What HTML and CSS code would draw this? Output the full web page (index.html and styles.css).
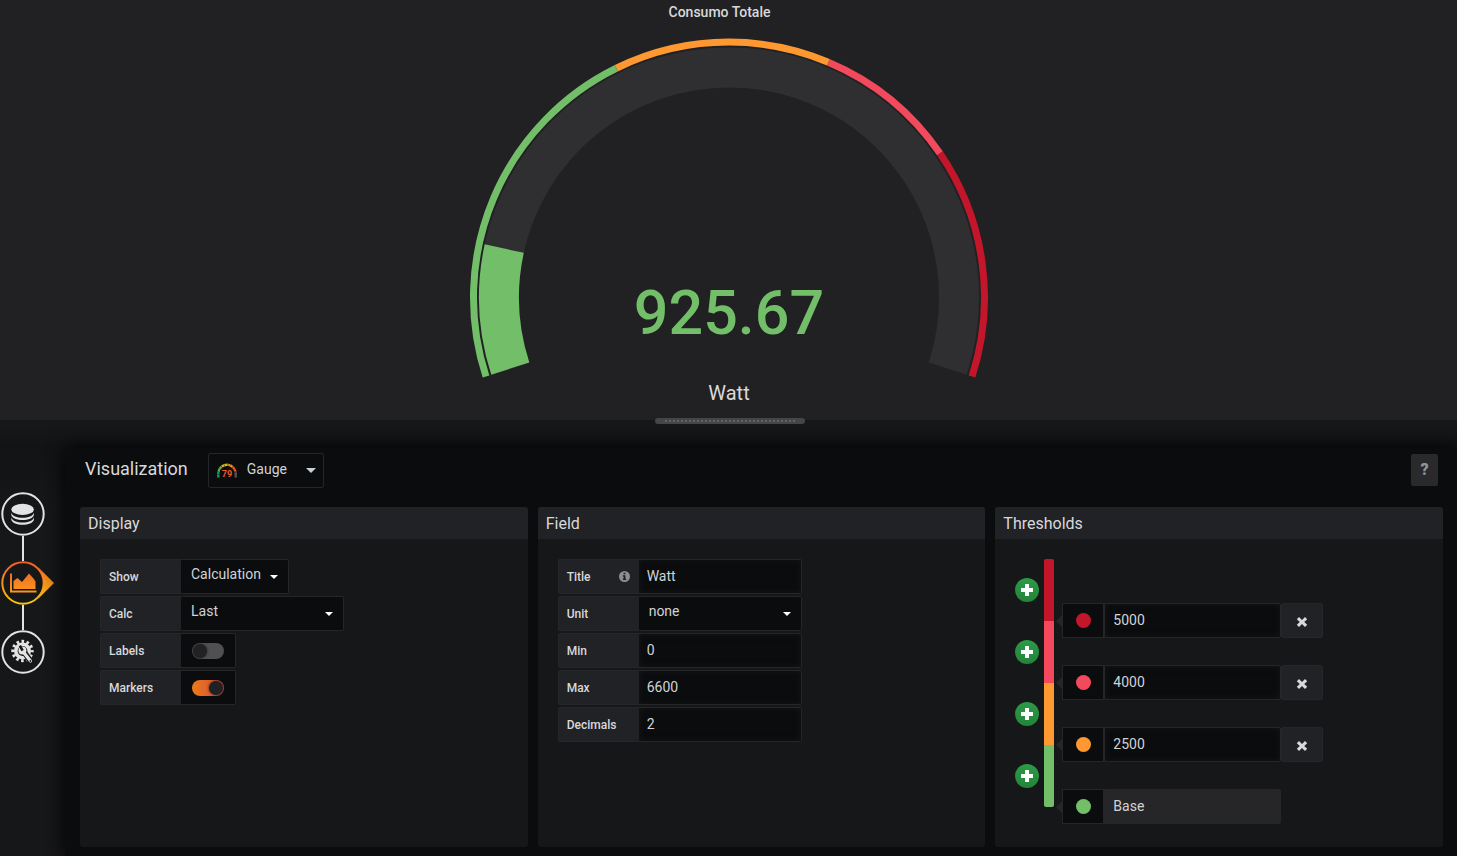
FILE: index.html
```html
<!DOCTYPE html>
<html lang="en">
<head>
<meta charset="utf-8">
<title>Consumo Totale</title>
<link rel="stylesheet" href="styles.css">
</head>
<body>
<section class="preview">
  <h1 class="preview-title">Consumo Totale</h1>
  <svg class="gauge" viewBox="0 0 520 388" role="img" aria-label="925.67 Watt">
    <g fill="none">
      <path stroke="#2f2f32" stroke-width="40" d="M41.3 343.6A230 230 0 1 1 478.7 343.6" pathLength="6600" stroke-dasharray="0 925 9000"/>
      <path stroke="#73bf69" stroke-width="40" d="M41.3 343.6A230 230 0 1 1 478.7 343.6" pathLength="6600" stroke-dasharray="925.67 9000"/>
      <path stroke="#c4162a" stroke-width="7" d="M17 351.5A255.5 255.5 0 1 1 503 351.5" pathLength="6600" stroke-dasharray="0 5000 1700 9000"/>
      <path stroke="#f2495c" stroke-width="7" d="M17 351.5A255.5 255.5 0 1 1 503 351.5" pathLength="6600" stroke-dasharray="0 4000 1000 9000"/>
      <path stroke="#ff9830" stroke-width="7" d="M17 351.5A255.5 255.5 0 1 1 503 351.5" pathLength="6600" stroke-dasharray="0 2500 1500 9000"/>
      <path stroke="#73bf69" stroke-width="7" d="M17 351.5A255.5 255.5 0 1 1 503 351.5" pathLength="6600" stroke-dasharray="2500 9000"/>
    </g>
    <text class="gauge-value" x="260" y="309">925.67</text>
    <text class="gauge-title" x="260" y="375">Watt</text>
  </svg>
  <div class="resizer"><div class="resizer-dots"></div></div>
</section>

<main class="editor">
  <nav class="tabs">
    <button class="tab" aria-label="Queries">
      <svg viewBox="0 0 56 44" width="56" height="44">
        <circle class="ring" cx="23" cy="22" r="20.7"/>
        <g fill="#e3e3e3"><ellipse cx="22.600" cy="17.400" rx="11.300" ry="5.600"/>
        <path d="M11.300 20.500c1 7 21.600 7 22.600 0v2.200c-1 7-21.600 7-22.600 0zM11.300 25.300c1 7 21.600 7 22.600 0v2.200c-1 7-21.600 7-22.600 0z"/></g>
      </svg>
    </button>
    <span class="tab-line"></span>
    <button class="tab" aria-label="Visualization">
      <svg viewBox="0 0 56 44" width="56" height="44">
        <defs><linearGradient id="hot" x1="0" y1="0" x2="0" y2="44" gradientUnits="userSpaceOnUse"><stop offset="0" stop-color="#f05a28"/><stop offset="1" stop-color="#fbca0a"/></linearGradient><linearGradient id="chart" x1="0" y1="12" x2="0" y2="32" gradientUnits="userSpaceOnUse"><stop offset="0" stop-color="#f26b25"/><stop offset="1" stop-color="#f99b1c"/></linearGradient></defs>
        <path fill="url(#hot)" d="M38 6 54 22 38 38Q49 22 38 6z"/>
        <circle cx="23" cy="22" r="20.700" fill="#161719" stroke="url(#hot)" stroke-width="2"/>
        <path fill="url(#chart)" d="M10 12.500h2v17h24.500v2H10zM13.500 28V20l4-3 4.500 4 7-8.500 4.500 5 2 3V28z"/>
      </svg>
    </button>
    <span class="tab-line"></span>
    <button class="tab" aria-label="General">
      <svg viewBox="0 0 56 44" width="56" height="44">
        <circle class="ring" cx="23" cy="22" r="20.700"/>
        <circle cx="22.500" cy="21" r="6.700" fill="none" stroke="#e3e3e3" stroke-width="3.600"/>
        <circle cx="22.500" cy="21" r="9.600" fill="none" stroke="#e3e3e3" stroke-width="3.200" stroke-dasharray="2.600 2.427" stroke-dashoffset="1.300"/>
        <path fill="none" stroke="#161719" stroke-width="5.600" stroke-linecap="round" d="M24 22 30.500 31"/>
        <path fill="none" stroke="#e3e3e3" stroke-width="3.200" stroke-linecap="round" d="M23 21.500 30.500 31"/>
        <circle cx="22.400" cy="20.400" r="4" fill="#e3e3e3"/>
        <path stroke="#161719" stroke-width="2.600" d="M22.600 20.700 19.800 15.600"/>
        <circle cx="30.400" cy="31" r="0.900" fill="#161719"/>
      </svg>
    </button>
  </nav>

  <div class="content">
    <header class="toolbar">
      <h2 class="toolbar-title">Visualization</h2>
      <div class="picker picker-type">
        <svg class="type-icon" viewBox="0 0 20 15" width="20" height="15" aria-hidden="true">
          <g fill="none" stroke-width="2.400">
            <path stroke="#08a05c" d="M1.300 14.500V10.500A8.700 8.700 0 0 1 18.700 10.500V14.500" pathLength="100" stroke-dasharray="16 200"/>
            <path stroke="#70ac45" d="M1.300 14.500V10.500A8.700 8.700 0 0 1 18.700 10.500V14.500" pathLength="100" stroke-dasharray="0 16 18 200"/>
            <path stroke="#d5b323" d="M1.300 14.500V10.500A8.700 8.700 0 0 1 18.700 10.500V14.500" pathLength="100" stroke-dasharray="0 34 20 200"/>
            <path stroke="#f29020" d="M1.300 14.500V10.500A8.700 8.700 0 0 1 18.700 10.500V14.500" pathLength="100" stroke-dasharray="0 54 14 200"/>
            <path stroke="#f05a28" d="M1.300 14.500V10.500A8.700 8.700 0 0 1 18.700 10.500V14.500" pathLength="100" stroke-dasharray="0 68 14 200"/>
            <path stroke="#58585a" d="M1.300 14.500V10.500A8.700 8.700 0 0 1 18.700 10.500V14.500" pathLength="100" stroke-dasharray="0 82 18 200"/>
            <path stroke="#0b0c0e" stroke-width="3" stroke-opacity=".7" d="M1.300 14.500V10.500A8.700 8.700 0 0 1 18.700 10.500V14.500" stroke-dasharray="0 2.600 .4 0"/>
          </g>
          <text class="type-number" x="10" y="14">79</text>
        </svg>
        <select class="select" aria-label="Visualization type"><option>Gauge</option></select>
      </div>
      <button class="help">?</button>
    </header>

    <div class="panels">
      <section class="panel">
        <h3 class="panel-title">Display</h3>
        <div class="panel-body">
          <div class="row"><label class="label" for="show">Show</label><div class="picker picker-small"><select class="select" id="show"><option>Calculation</option></select></div></div>
          <div class="row"><label class="label" for="calc">Calc</label><div class="picker"><select class="select" id="calc"><option>Last</option></select></div></div>
          <div class="row"><label class="label" for="labels">Labels</label><div class="switch-box"><input class="switch" type="checkbox" id="labels"></div></div>
          <div class="row"><label class="label" for="markers">Markers</label><div class="switch-box"><input class="switch" type="checkbox" id="markers" checked></div></div>
        </div>
      </section>

      <section class="panel">
        <h3 class="panel-title">Field</h3>
        <div class="panel-body">
          <div class="row"><label class="label" for="title">Title
            <svg viewBox="0 0 12 12" width="11" height="11" aria-hidden="true"><circle cx="6" cy="6" r="6" fill="#8e8e8e"/><path fill="#212124" d="M5 1.800h2v1.800H5zM4.200 4.600H7v3.800h.8v1.400H4.200V8.400H5V6h-.8z"/></svg>
          </label><input class="input" id="title" type="text" value="Watt"></div>
          <div class="row"><label class="label" for="unit">Unit</label><div class="picker"><select class="select" id="unit"><option>none</option></select></div></div>
          <div class="row"><label class="label" for="min">Min</label><input class="input" id="min" type="number" value="0"></div>
          <div class="row"><label class="label" for="max">Max</label><input class="input" id="max" type="number" value="6600"></div>
          <div class="row"><label class="label" for="decimals">Decimals</label><input class="input" id="decimals" type="number" value="2"></div>
        </div>
      </section>

      <section class="panel">
        <h3 class="panel-title">Thresholds</h3>
        <div class="panel-body thresholds">
          <div class="adders">
            <button class="add" aria-label="Add threshold above 5000"><svg viewBox="0 0 12 12" width="12" height="12"><path d="M4 0h4v4h4v4H8v4H4V8H0V4h4z"/></svg></button>
            <button class="add" aria-label="Add threshold above 4000"><svg viewBox="0 0 12 12" width="12" height="12"><path d="M4 0h4v4h4v4H8v4H4V8H0V4h4z"/></svg></button>
            <button class="add" aria-label="Add threshold above 2500"><svg viewBox="0 0 12 12" width="12" height="12"><path d="M4 0h4v4h4v4H8v4H4V8H0V4h4z"/></svg></button>
            <button class="add" aria-label="Add threshold above base"><svg viewBox="0 0 12 12" width="12" height="12"><path d="M4 0h4v4h4v4H8v4H4V8H0V4h4z"/></svg></button>
          </div>
          <div class="scale"><span class="dark-red"></span><span class="red"></span><span class="orange"></span><span class="green"></span></div>
          <div class="levels">
            <div class="level"><button class="swatch" aria-label="Color"><span class="dot dark-red"></span></button><input class="input" type="number" value="5000" aria-label="Threshold 5000"><button class="remove" aria-label="Remove 5000"><svg viewBox="0 0 12 12" width="12" height="12"><path d="m3 1 3 3 3-3 2.200 2.200-3 2.800 3 2.800L9 11 6 8l-3 3L.8 8.800l3-2.800-3-2.800z"/></svg></button></div>
            <div class="level"><button class="swatch" aria-label="Color"><span class="dot red"></span></button><input class="input" type="number" value="4000" aria-label="Threshold 4000"><button class="remove" aria-label="Remove 4000"><svg viewBox="0 0 12 12" width="12" height="12"><path d="m3 1 3 3 3-3 2.200 2.200-3 2.800 3 2.800L9 11 6 8l-3 3L.8 8.800l3-2.800-3-2.800z"/></svg></button></div>
            <div class="level"><button class="swatch" aria-label="Color"><span class="dot orange"></span></button><input class="input" type="number" value="2500" aria-label="Threshold 2500"><button class="remove" aria-label="Remove 2500"><svg viewBox="0 0 12 12" width="12" height="12"><path d="m3 1 3 3 3-3 2.200 2.200-3 2.800 3 2.800L9 11 6 8l-3 3L.8 8.800l3-2.800-3-2.800z"/></svg></button></div>
            <div class="level"><button class="swatch" aria-label="Color"><span class="dot green"></span></button><input class="input" type="text" value="Base" readonly aria-label="Base threshold"></div>
          </div>
        </div>
      </section>
    </div>
  </div>
</main>
</body>
</html>
```

FILE: styles.css
```css
* { box-sizing: border-box; }

body {
  margin: 0;
  min-height: 100vh;
  display: flex;
  flex-direction: column;
  background: #161719;
  color: #d8d9da;
  font: 14px/20px Roboto, "Liberation Sans", sans-serif;
}

h1, h2, h3 { margin: 0; font-weight: 400; }
button { margin: 0; padding: 0; border: 0; background: none; font: inherit; cursor: pointer; }

/* Preview */
.preview {
  display: flex;
  flex-direction: column;
  align-items: center;
  background: #212124;
}
.preview-title {
  padding: 2px 18px 3px 0;
  font-size: 14px;
  line-height: 20px;
  font-weight: 500;
}
.gauge { width: 520px; max-width: 100%; margin-left: 1px; display: block; }
.gauge-value { font-size: 61px; font-weight: 500; fill: #73bf69; text-anchor: middle; }
.gauge-title { font-size: 20px; fill: #d8d9da; text-anchor: middle; }
.resizer {
  width: 150px;
  height: 6px;
  margin: 5px 0 -4px 2px;
  padding: 2px 10px;
  border-radius: 3px;
  background: #464648;
  z-index: 1;
}
.resizer-dots {
  height: 2px;
  background: repeating-linear-gradient(90deg, #626264 0 2px, transparent 2px 4px);
}

/* Editor */
.editor {
  flex: 1;
  display: flex;
  padding-top: 27px;
  border-top: 1px solid #161618;
  background: linear-gradient(#17181a, #121315 27px, #161719 90px);
}
.tabs {
  flex: none;
  width: 65px;
  padding-top: 44px;
  display: flex;
  flex-direction: column;
  align-items: flex-start;
}
.tab { height: 44px; color: #e3e3e3; }
.tab svg { display: block; }
.ring { fill: none; stroke: #e3e3e3; stroke-width: 2; }
.tab-line { width: 2px; height: 25px; margin-left: 22px; background: #e3e3e3; }

.content {
  flex: 1;
  min-width: 0;
  display: flex;
  flex-direction: column;
  padding: 5px 14px 9px 15px;
  border-radius: 5px 0 0 0;
  background: #0b0c0e;
  box-shadow: 0 0 20px #000;
  clip-path: inset(-27px 0 0 -20px);
}
.toolbar { display: flex; align-items: flex-start; gap: 20px; padding: 0 5px 19px; }
.toolbar-title { padding-top: 4px; font-size: 18px; line-height: 24px; }
.help {
  width: 27px;
  height: 32px;
  margin: 1px 0 0 auto;
  border-radius: 2px;
  background: #2a2a2c;
  color: #8e9499;
  font-size: 16px;
  font-weight: 900;
}

.picker { position: relative; width: 163px; height: 35px; }
.picker::after {
  content: "";
  position: absolute;
  right: 11px;
  top: 16px;
  border: solid transparent;
  border-width: 4px 4px 0;
  border-top-color: #fff;
  pointer-events: none;
}
.select {
  appearance: none;
  width: 100%;
  height: 100%;
  padding: 0 20px 5px 10px;
  border: 1px solid #262628;
  border-left: 0;
  border-radius: 2px;
  background: #0b0c0e;
  color: #d0d3d6;
  font: inherit;
}
.picker-small { width: 108px; }
.picker-type { width: 116px; }
.picker-type .select { padding: 0 20px 3px 38px; border-left: 1px solid #262628; }
.picker-type::after { right: 8px; top: 15px; border-width: 5px 5px 0; border-top-color: #c7d0d9; }
.type-icon { position: absolute; left: 9px; top: 10px; }
.type-number { font-size: 9px; font-weight: 700; fill: #f05a28; text-anchor: middle; }

/* Panels */
.panels { flex: 1; display: grid; grid-template-columns: repeat(3, 1fr); gap: 10px; }
.panel { min-width: 0; border-radius: 3px; background: #161719; }
.panel-title {
  padding: 5px 8px 3px;
  border-radius: 3px 3px 0 0;
  background: #212226;
  font-size: 16px;
  line-height: 24px;
}
.panel-body { display: flex; flex-direction: column; gap: 2px; padding: 20px; }
.row { display: flex; height: 35px; }
.label {
  width: 81px;
  display: flex;
  align-items: center;
  justify-content: space-between;
  padding: 0 9px 0 8px;
  border: 1px solid #262628;
  border-right: 0;
  border-radius: 2px 0 0 2px;
  background: #212226;
  font-size: 12px;
  font-weight: 500;
}
.input {
  width: 163px;
  height: 35px;
  padding: 0 8px 1px;
  border: 1px solid #262628;
  border-left: 0;
  border-radius: 0 2px 2px 0;
  background: #0b0c0e;
  box-shadow: inset 0 0 6px #141619;
  color: #d0d3d6;
  font: inherit;
  appearance: textfield;
}
.input::-webkit-inner-spin-button { display: none; }
.switch-box {
  width: 55px;
  display: flex;
  align-items: center;
  justify-content: center;
  border: 1px solid #262628;
  border-left: 0;
  border-radius: 0 2px 2px 0;
  background: #0b0c0e;
}
.switch {
  appearance: none;
  width: 32px;
  height: 16px;
  margin: 0;
  padding: 1px;
  display: flex;
  border-radius: 8px;
  background: #505052;
}
.switch::before {
  content: "";
  width: 14px;
  height: 14px;
  border-radius: 50%;
  background: #212124;
  box-shadow: 0 0 3px #212124;
}
.switch:checked { justify-content: flex-end; background: linear-gradient(90deg, #eb7b18, #d44a3a); }

/* Thresholds */
.thresholds { flex-direction: row; gap: 0; }
.adders { display: flex; flex-direction: column; gap: 38px; padding-top: 19px; }
.add {
  width: 24px;
  height: 24px;
  display: grid;
  place-items: center;
  border-radius: 50%;
  background: linear-gradient(#2b9b46, #23843b);
  fill: #fff;
}
.scale { width: 10px; height: 248px; margin-left: 5px; display: flex; flex-direction: column; border-radius: 2px; overflow: hidden; }
.scale span { flex: 1; }
.levels { display: flex; flex-direction: column; gap: 27px; padding: 44px 0 0 8px; }
.level { position: relative; display: flex; height: 35px; }
.level::before {
  content: "";
  position: absolute;
  left: -6px;
  top: 12px;
  border: solid transparent;
  border-width: 6px 6px 6px 0;
  border-right-color: #262628;
}
.swatch {
  width: 42px;
  display: grid;
  place-items: center;
  border: 1px solid #262628;
  background: #0b0c0e;
}
.dot { width: 15px; height: 15px; border-radius: 50%; }
.level .input { width: 177px; border-left: 1px solid #262628; }
.level .input:read-only { background: #262628; box-shadow: none; }
.remove {
  width: 42px;
  display: grid;
  place-items: center;
  padding-top: 2px;
  border: 1px solid #262628;
  border-radius: 2px;
  background: #212226;
  fill: #d8d9da;
}
.dark-red { background: #c4162a; }
.red { background: #f2495c; }
.orange { background: #ff9830; }
.green { background: #73bf69; }
```
